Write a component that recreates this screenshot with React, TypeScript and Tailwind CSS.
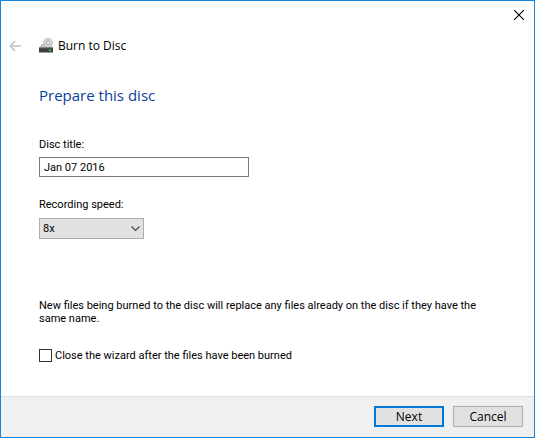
import { useState } from 'react';

function DriveIcon() {
  return (
    <svg width="16" height="16" viewBox="0 0 16 16" aria-hidden="true">
      <path d="M3.5 6h9.5l2 4H1Z" fill="#c4c6c8" />
      <circle cx="10" cy="4.8" r="4.4" fill="#dfe0e1" stroke="#a9acae" strokeWidth="0.9" />
      <circle cx="10" cy="4.8" r="1.9" fill="#fafafa" stroke="#929597" strokeWidth="1" />
      <rect x="1" y="9.5" width="14" height="5" rx="0.5" fill="#3b3d3f" />
      <path d="M1.5 9.8h13" stroke="#808385" strokeWidth="0.8" />
      <rect x="10.8" y="11.6" width="2.4" height="1.5" fill="#35d453" />
    </svg>
  );
}

export default function BurnToDisc() {
  const [title, setTitle] = useState('Jan 07 2016');
  const [speed, setSpeed] = useState('8x');
  const [closeAfter, setCloseAfter] = useState(false);

  return (
    <form
      className="flex flex-col min-h-screen bg-white border border-[#1883d7] text-black text-[11px] leading-[13px] font-['Roboto',sans-serif]"
      onSubmit={(e) => e.preventDefault()}
    >
      <header className="font-['Open_Sans',sans-serif]">
        <div className="flex justify-end">
          <button type="button" aria-label="Close" className="flex items-center justify-center w-[30px] h-7">
            <svg width="10" height="10" viewBox="0 0 10 10" stroke="#000" strokeWidth="1.1">
              <path d="M0 0 10 10M10 0 0 10" />
            </svg>
          </button>
        </div>
        <div className="flex items-center h-[34px] pl-2">
          <button type="button" aria-label="Back" disabled className="mr-4">
            <svg width="13" height="12" viewBox="0 0 13 12" fill="none" stroke="#c4c4c4" strokeWidth="1.7">
              <path d="M12 6H1.5M6 1 1.3 6 6 11" />
            </svg>
          </button>
          <DriveIcon />
          <span className="ml-1 text-xs">Burn to Disc</span>
        </div>
      </header>

      <main className="flex flex-col flex-1 items-start pl-[38px] pr-14 pt-[22px]">
        <h1 className="text-[15px] leading-5 text-[#0a3f9a] mb-[33px] font-['Open_Sans',sans-serif]">Prepare this disc</h1>

        <label htmlFor="disc-title" className="mb-1.5">Disc title:</label>
        <input
          id="disc-title"
          type="text"
          value={title}
          onChange={(e) => setTitle(e.target.value)}
          className="w-[210px] h-5 px-1 border border-[#7a7a7a] outline-none"
        />

        <label htmlFor="speed" className="mt-[21px] mb-[7px]">Recording speed:</label>
        <div className="relative">
          <select
            id="speed"
            value={speed}
            onChange={(e) => setSpeed(e.target.value)}
            className="block appearance-none w-[105px] h-[21px] pl-[3px] bg-[#e1e1e1] border border-[#adadad]"
          >
            <option>8x</option>
            <option>4x</option>
            <option>2x</option>
          </select>
          <svg
            className="absolute right-1 top-2 pointer-events-none"
            width="9"
            height="6"
            viewBox="0 0 9 6"
            fill="none"
            stroke="#444"
            strokeWidth="1.1"
          >
            <path d="m0.5 0.5 4 4 4-4" />
          </svg>
        </div>

        <p className="mt-[60px] mb-6">
          New files being burned to the disc will replace any files already on the disc if they have the same name.
        </p>

        <label className="flex items-center gap-[3px]">
          <input
            type="checkbox"
            checked={closeAfter}
            onChange={(e) => setCloseAfter(e.target.checked)}
            className="appearance-none size-[13px] bg-white border border-[#333] checked:bg-[#333]"
          />
          Close the wizard after the files have been burned
        </label>
      </main>

      <footer className="flex justify-end gap-[9px] px-[11px] pt-[9px] pb-[10px] bg-[#f0f0f0] border-t border-[#dfdfdf] text-xs font-['Open_Sans',sans-serif]">
        <button type="submit" className="w-[70px] h-[21px] leading-4 bg-[#e1e1e1] border-2 border-[#0078d7]">
          Next
        </button>
        <button type="button" className="w-[70px] h-[21px] leading-4 bg-[#e1e1e1] border border-[#adadad]">
          Cancel
        </button>
      </footer>
    </form>
  );
}
